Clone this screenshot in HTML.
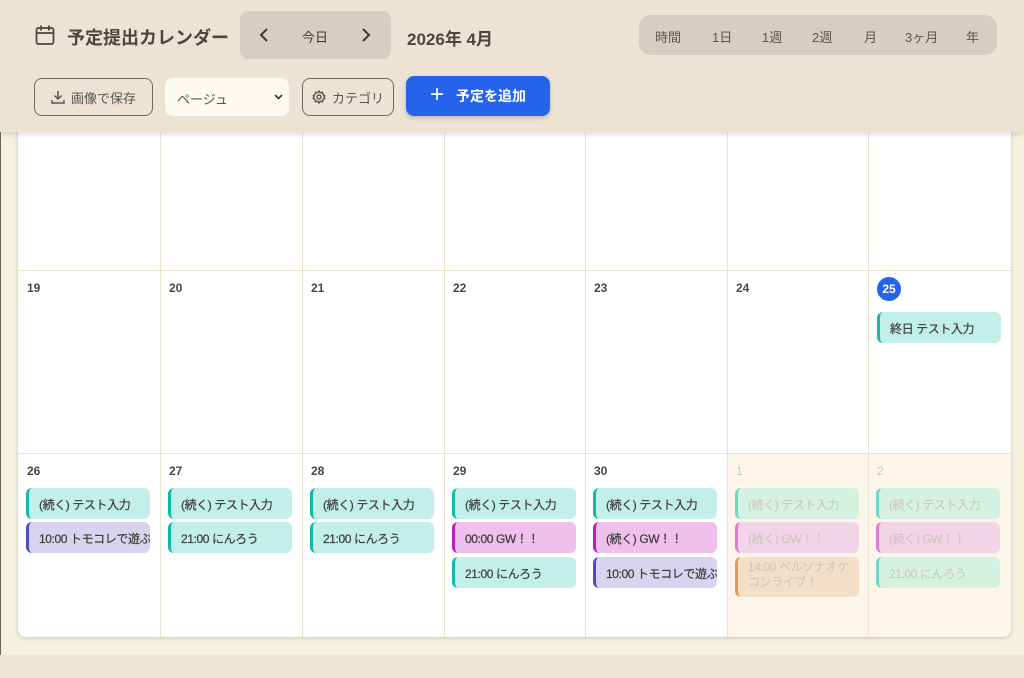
<!DOCTYPE html>
<html><head><meta charset="utf-8"><style>
*{box-sizing:border-box;margin:0;padding:0}
body{width:1024px;height:678px;overflow:hidden;background:#f4f1dd;font-family:"Liberation Sans","Noto Sans CJK JP",sans-serif;color:#3d3a35;position:relative}
.lb{position:absolute;left:0;top:0;width:1px;height:678px;background:#6b6656}
.foot{position:absolute;left:0;top:655px;width:1024px;height:23px;background:#ede7d6}
.card{position:absolute;left:18px;top:80px;width:993px;height:557px;background:#fff;border-radius:8px;box-shadow:0 1px 4px rgba(0,0,0,.18);overflow:hidden}
.vl{position:absolute;top:0;width:1px;height:557px;background:#ebe2d0}
.hl{position:absolute;left:0;width:994px;height:1px;background:#ebe2d0}
.oo{position:absolute;left:710px;top:374px;width:284px;height:183px;background:#fbf5ea}
.num{position:absolute;font-size:12px;font-weight:bold;color:#4a4640}
.num.o{color:#cfc8bb;font-weight:normal}
.ev{position:absolute;width:124px;height:31px;border-radius:6px;border-left:3px solid;font-size:12px;letter-spacing:-0.4px;padding:8px 0 0 10px;white-space:nowrap;overflow:hidden;color:#3d3a35;-webkit-text-stroke:0.2px #3d3a35}
.t{background:#c2f0e8;border-color:#14b8a6}
.p{background:#efc0ec;border-color:#c21bbd}
.v{background:#d8d4f0;border-color:#4f4ac8}
.ev.f,.or{color:#c9c4ba;-webkit-text-stroke:0}
.t.f{background:#d5f1e2;border-color:#6ed8c4}
.p.f{background:#f3d3e6;border-color:#dc7cd6}
.or{background:#f3dfc8;border-color:#e39a5e;height:40px;line-height:15px;padding-top:3px;white-space:normal}
.hdr{position:absolute;left:0;top:0;width:1024px;height:132px;background:#ece3d3;box-shadow:0 2px 5px rgba(0,0,0,.15)}
.a{position:absolute}
.btn{position:absolute;top:78px;height:38px;border:1px solid #6f6a60;border-radius:8px;font-size:13px;color:#555;display:flex;align-items:center;justify-content:center;gap:6px}
</style></head><body>
<div class="lb"></div>
<div class="card">
<div class="oo"></div>
<div class="vl" style="left:142px"></div><div class="vl" style="left:284px"></div><div class="vl" style="left:426px"></div><div class="vl" style="left:567px"></div><div class="vl" style="left:709px"></div><div class="vl" style="left:850px"></div>
<div class="hl" style="top:190px"></div><div class="hl" style="top:373px"></div>

<div class="num" style="left:9px;top:201px">19</div>
<div class="num" style="left:151px;top:201px">20</div>
<div class="num" style="left:293px;top:201px">21</div>
<div class="num" style="left:435px;top:201px">22</div>
<div class="num" style="left:576px;top:201px">23</div>
<div class="num" style="left:718px;top:201px">24</div>
<div class="a" style="left:859px;top:197px;width:24px;height:24px;border-radius:50%;background:#2563eb;color:#fff;font-size:12px;font-weight:bold;text-align:center;line-height:24px">25</div>
<div class="ev t" style="left:859px;top:232px">終日 テスト入力</div>

<div class="num" style="left:9px;top:384px">26</div>
<div class="num" style="left:151px;top:384px">27</div>
<div class="num" style="left:293px;top:384px">28</div>
<div class="num" style="left:435px;top:384px">29</div>
<div class="num" style="left:576px;top:384px">30</div>
<div class="num o" style="left:718px;top:384px">1</div>
<div class="num o" style="left:859px;top:384px">2</div>

<div class="ev t" style="left:8px;top:408px">(続く) テスト入力</div>
<div class="ev v" style="left:8px;top:442px">10:00 トモコレで遊ぶ</div>
<div class="ev t" style="left:150px;top:408px">(続く) テスト入力</div>
<div class="ev t" style="left:150px;top:442px">21:00 にんろう</div>
<div class="ev t" style="left:292px;top:408px">(続く) テスト入力</div>
<div class="ev t" style="left:292px;top:442px">21:00 にんろう</div>
<div class="ev t" style="left:434px;top:408px">(続く) テスト入力</div>
<div class="ev p" style="left:434px;top:442px">00:00 GW！！</div>
<div class="ev t" style="left:434px;top:477px">21:00 にんろう</div>
<div class="ev t" style="left:575px;top:408px">(続く) テスト入力</div>
<div class="ev p" style="left:575px;top:442px">(続く) GW！！</div>
<div class="ev v" style="left:575px;top:477px">10:00 トモコレで遊ぶ</div>
<div class="ev t f" style="left:717px;top:408px">(続く) テスト入力</div>
<div class="ev p f" style="left:717px;top:442px">(続く) GW！！</div>
<div class="ev or" style="left:717px;top:477px">14:00 ペルソナオケコンライブ！</div>
<div class="ev t f" style="left:858px;top:408px">(続く) テスト入力</div>
<div class="ev p f" style="left:858px;top:442px">(続く) GW！！</div>
<div class="ev t f" style="left:858px;top:477px">21:00 にんろう</div>
</div>
<div class="foot"></div>
<div class="hdr">
<svg class="a" style="left:35px;top:24px" width="20" height="22" viewBox="0 0 20 22" fill="none" stroke="#4a4640" stroke-width="1.8"><rect x="1.5" y="4" width="17" height="16" rx="2"/><path d="M1.5 9h17M6 1.5v5M14 1.5v5"/></svg>
<div class="a" style="left:67px;top:24px;font-size:18px;font-weight:bold;color:#4a4640">予定提出カレンダー</div>
<div class="a" style="left:240px;top:11px;width:151px;height:48px;background:#d6cfc1;border-radius:8px"></div>
<svg class="a" style="left:258px;top:27px" width="12" height="16" viewBox="0 0 12 16" fill="none" stroke="#3d3a35" stroke-width="2"><path d="M9 2L3 8l6 6"/></svg>
<div class="a" style="left:302px;top:27px;font-size:13px;color:#3d3a35">今日</div>
<svg class="a" style="left:360px;top:27px" width="12" height="16" viewBox="0 0 12 16" fill="none" stroke="#3d3a35" stroke-width="2"><path d="M3 2l6 6-6 6"/></svg>
<div class="a" style="left:407px;top:25px;font-size:17px;font-weight:bold;color:#4a4640">2026年 4月</div>
<div class="a" style="left:639px;top:15px;width:358px;height:40px;background:#d6cfc1;border-radius:12px;font-size:13px;color:#5a564e">
<span class="a" style="left:16px;top:12px">時間</span><span class="a" style="left:73px;top:12px">1日</span><span class="a" style="left:123px;top:12px">1週</span><span class="a" style="left:173px;top:12px">2週</span><span class="a" style="left:225px;top:12px">月</span><span class="a" style="left:266px;top:12px">3ヶ月</span><span class="a" style="left:327px;top:12px">年</span>
</div>
<div class="btn" style="left:34px;width:119px"><svg width="14" height="14" viewBox="0 0 14 14" fill="none" stroke="#555" stroke-width="1.5"><path d="M7 1v8M3.5 5.5L7 9l3.5-3.5M1 10v3h12v-3"/></svg>画像で保存</div>
<div class="a" style="left:165px;top:78px;width:124px;height:38px;background:#fdfbf1;border-radius:8px;font-size:13px;color:#555;padding:11px 0 0 12px">ページュ<svg style="position:absolute;right:6px;top:16px" width="9" height="6" viewBox="0 0 9 6" fill="none" stroke="#333" stroke-width="1.6"><path d="M1 1l3.5 3.5L8 1"/></svg></div>
<div class="btn" style="left:302px;width:92px"><svg width="14" height="14" viewBox="0 0 14 14" fill="none" stroke="#555" stroke-width="1.4"><circle cx="7" cy="7" r="2"/><path d="M7 1l1.3 1.8 2.2-.5.5 2.2L12.8 5.8 12 7l.8 1.2-1.8 1.3-.5 2.2-2.2-.5L7 13l-1.3-1.8-2.2.5-.5-2.2L1.2 8.2 2 7l-.8-1.2L3 4.5l.5-2.2 2.2.5z"/></svg>カテゴリ</div>
<div class="a" style="left:406px;top:76px;width:144px;height:40px;background:#2563eb;border-radius:8px;color:#fff;font-size:14px;font-weight:bold;display:flex;align-items:center;justify-content:center;gap:12px;box-shadow:0 2px 4px rgba(0,0,0,.2)"><span style="font-size:24px;font-weight:normal;line-height:1;margin-top:-3px">+</span>予定を追加</div>
</div>
</body></html>
